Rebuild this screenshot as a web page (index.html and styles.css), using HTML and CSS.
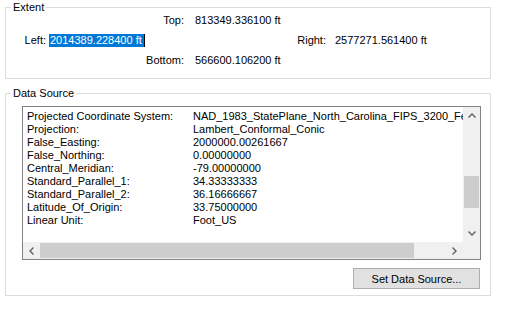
FILE: index.html
```html
<!DOCTYPE html>
<html lang="en">
<head>
<meta charset="utf-8">
<title>Layer Properties · Source</title>
<link rel="stylesheet" href="styles.css">
</head>
<body>
  <div class="dialog">

    <!-- extent of the layer -->
    <fieldset class="group extent">
      <legend>Extent</legend>
      <div class="ext-row">
        <span class="lbl lbl-top">Top:</span>
        <span class="val val-mid">813349.336100 ft</span>
      </div>
      <div class="ext-row">
        <span class="lbl lbl-left">Left:</span>
        <span class="val val-sel">2014389.228400 ft</span>
        <span class="lbl lbl-right">Right:</span>
        <span class="val val-right">2577271.561400 ft</span>
      </div>
      <div class="ext-row">
        <span class="lbl lbl-top">Bottom:</span>
        <span class="val val-mid">566600.106200 ft</span>
      </div>
    </fieldset>

    <!-- data source -->
    <fieldset class="group source">
      <legend>Data Source</legend>
      <div class="listbox">
        <div class="list-main">
          <div class="list-content">
            <div class="prop"><span class="key">Projected Coordinate System:</span><span>NAD_1983_StatePlane_North_Carolina_FIPS_3200_Feet</span></div>
            <div class="prop"><span class="key">Projection:</span><span>Lambert_Conformal_Conic</span></div>
            <div class="prop"><span class="key">False_Easting:</span><span>2000000.00261667</span></div>
            <div class="prop"><span class="key">False_Northing:</span><span>0.00000000</span></div>
            <div class="prop"><span class="key">Central_Meridian:</span><span>-79.00000000</span></div>
            <div class="prop"><span class="key">Standard_Parallel_1:</span><span>34.33333333</span></div>
            <div class="prop"><span class="key">Standard_Parallel_2:</span><span>36.16666667</span></div>
            <div class="prop"><span class="key">Latitude_Of_Origin:</span><span>33.75000000</span></div>
            <div class="prop"><span class="key">Linear Unit:</span><span>Foot_US</span></div>
          </div>
          <div class="vscroll">
            <div class="sb-btn">
              <svg width="8" height="5" viewBox="0 0 8 5"><path d="M0.5 4.5 L4 1 L7.5 4.5" fill="none" stroke="#606060" stroke-width="1.4"/></svg>
            </div>
            <div class="sb-track">
              <div class="sb-thumb v-thumb"></div>
            </div>
            <div class="sb-btn">
              <svg width="8" height="5" viewBox="0 0 8 5"><path d="M0.5 0.5 L4 4 L7.5 0.5" fill="none" stroke="#606060" stroke-width="1.4"/></svg>
            </div>
          </div>
        </div>
        <div class="hscroll">
          <div class="sb-btn">
            <svg width="5" height="8" viewBox="0 0 5 8"><path d="M4.5 0.5 L1 4 L4.5 7.5" fill="none" stroke="#606060" stroke-width="1.4"/></svg>
          </div>
          <div class="sb-track h-track">
            <div class="sb-thumb h-thumb"></div>
          </div>
          <div class="sb-btn">
            <svg width="5" height="8" viewBox="0 0 5 8"><path d="M0.5 0.5 L4 4 L0.5 7.5" fill="none" stroke="#606060" stroke-width="1.4"/></svg>
          </div>
          <div class="sb-corner"></div>
        </div>
      </div>
      <div class="actions">
        <button type="button">Set Data Source...</button>
      </div>
    </fieldset>

  </div>
</body>
</html>
```

FILE: styles.css
```css
/* classic Windows property-page look */
:root{
  --group-line:#dcdcdc;
  --box-line:#828282;
  --sb-bg:#f0f0f0;
  --sb-thumb:#cdcdcd;
  --select:#0078d7;
}
*{box-sizing:border-box}
body{
  margin:0;background:#fff;color:#000;
  font:11px/13px "Liberation Sans",Arial,sans-serif;
}
.dialog{padding:1px 0 0 5px;width:491px}

.group{
  margin:0;border:1px solid var(--group-line);min-width:0;
}
.group legend{padding:0 2px;margin-left:5px;line-height:13px}

/* ---------- extent ---------- */
.extent{padding:0 0 10px 0;display:flex;flex-direction:column;gap:7px;height:78px}
.ext-row{display:flex;height:13px;align-items:center}
.lbl{text-align:right;flex:none;white-space:nowrap}
.lbl-top{width:178px}
.lbl-left{width:40px}
.lbl-right{width:181px}
.val{white-space:nowrap}
.val-mid{margin-left:11px}
.val-sel{margin-left:3px;background:var(--select);color:#fff;padding:0 1px;width:96px;
  border-right:1px solid #000}
.val-right{margin-left:9px}

/* ---------- data source ---------- */
.source{margin-top:8px;padding:6px 9px 6px 0;height:209px}
.listbox{margin-left:16px;border:1px solid var(--box-line);height:154px;display:flex;flex-direction:column}
.list-main{flex:1;display:flex;min-height:0}
.list-content{flex:1;overflow:hidden;padding:3px 0 0 4px;white-space:nowrap}
.prop{display:flex;height:13px}
.key{width:166px;flex:none}

.vscroll{width:17px;background:var(--sb-bg);display:flex;flex-direction:column}
.sb-btn{flex:none;width:17px;height:17px;display:flex;align-items:center;justify-content:center}
.sb-track{flex:1;position:relative}
.v-thumb{position:absolute;left:1px;right:1px;top:52px;height:32px;background:var(--sb-thumb)}

.hscroll{height:17px;display:flex;background:var(--sb-bg)}
.h-track{flex:1}
.h-thumb{position:absolute;top:1px;bottom:1px;left:0;width:374px;background:var(--sb-thumb)}
.sb-corner{width:17px;flex:none}

.actions{display:flex;justify-content:flex-end;margin-top:8px;padding-right:1px}
button{
  width:127px;height:21px;margin:0;padding:0;
  background:#e1e1e1;border:1px solid #adadad;border-radius:0;
  font:11px "Liberation Sans",Arial,sans-serif;color:#000;
}
```
